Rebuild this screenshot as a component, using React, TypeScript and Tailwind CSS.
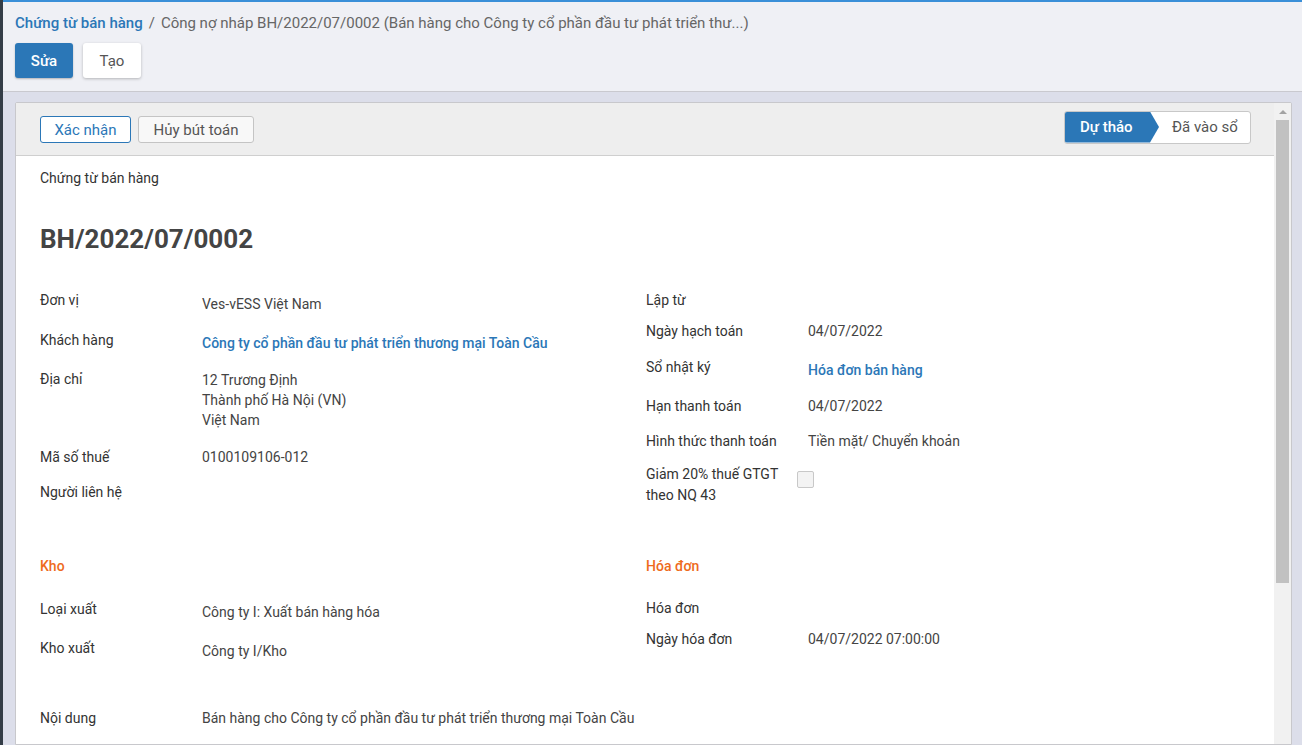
import React from 'react';

const BLUE = 'text-[#2b77b7]';

interface FieldProps {
  label: React.ReactNode;
  value?: React.ReactNode;
  link?: boolean;
  rowH: string;
  valueOffset?: string;
}

const Field: React.FC<FieldProps> = ({ label, value, link, rowH, valueOffset = '' }) => (
  <div className={`flex ${rowH}`}>
    <div className="w-[162px] shrink-0 text-[#333]">{label}</div>
    {value !== undefined && (
      <div className={`${valueOffset} ${link ? `${BLUE} font-medium` : 'text-[#444]'}`}>{value}</div>
    )}
  </div>
);

const ScrollBar = () => (
  <div className="w-[17px] shrink-0 bg-[#f1f1f1] flex flex-col items-center">
    <div className="h-[17px] flex items-center justify-center">
      <div className="w-0 h-0 border-l-[4px] border-r-[4px] border-b-[4px] border-l-transparent border-r-transparent border-b-[#a3a3a3]" />
    </div>
    <div className="w-[13px] h-[463px] bg-[#c1c1c1]" />
  </div>
);

export default function App() {
  return (
    <div
      className="h-[745px] w-full overflow-hidden flex bg-[#dcdeea] text-[14px] leading-[20px]"
      style={{ fontFamily: 'Roboto, "Noto Sans", "Liberation Sans", sans-serif' }}
    >
      {/* left sidebar edge */}
      <div className="w-[3px] shrink-0 bg-[#343d47]" />

      <div className="flex-1 flex flex-col min-w-0">
        <div className="h-[2px] bg-[#3a8fd8]" />

        {/* Control panel */}
        <div className="bg-[#eff0f5] border-b border-[#c9c9cf] h-[90px] px-[12px] pt-[11px]">
          <div className="flex items-center gap-[6px] text-[15px]">
            <span className={`${BLUE} font-medium`}>Chứng từ bán hàng</span>
            <span className="text-[#666]">/</span>
            <span className="text-[#666]">Công nợ nháp BH/2022/07/0002 (Bán hàng cho Công ty cổ phần đầu tư phát triển thư...)</span>
          </div>
          <div className="flex gap-[10px] mt-[10px]">
            <button className="w-[58px] h-[35px] rounded-[3px] bg-[#2b77b7] text-white text-[15px] font-medium shadow-[0_1px_2px_rgba(0,0,0,0.25)]">
              Sửa
            </button>
            <button className="w-[58px] h-[35px] rounded-[3px] bg-white text-[#555] text-[15px] shadow-[0_1px_3px_rgba(0,0,0,0.25)]">
              Tạo
            </button>
          </div>
        </div>

        {/* Content area */}
        <div className="flex-1 pl-[12px] pr-[10px] pt-[10px] min-h-0">
          <div className="h-full bg-white border border-[#c8c8cc] rounded-t-[2px] flex overflow-hidden">
            <div className="flex-1 flex flex-col min-w-0">
              {/* statusbar */}
              <div className="h-[53px] shrink-0 bg-[#eeeeee] border-b border-[#cfcfcf] flex items-center justify-between pl-[24px] pr-[23px] text-[15px]">
                <div className="flex gap-[7px] mt-[1px]">
                  <button className={`h-[27px] w-[91px] rounded-[3px] border border-[#2b77b7] bg-white ${BLUE}`}>
                    Xác nhận
                  </button>
                  <button className="h-[27px] w-[116px] rounded-[3px] border border-[#c4c4c4] bg-[#f8f8f8] text-[#555]">
                    Hủy bút toán
                  </button>
                </div>
                <div className="relative flex h-[33px] w-[187px] rounded-[3px] border border-[#c8c8c8] bg-white overflow-hidden -mt-[4px]">
                  <div className="w-[94px] h-full bg-[#2b77b7] text-white font-medium flex items-center pl-[15px] [clip-path:polygon(0_0,calc(100%-9px)_0,100%_50%,calc(100%-9px)_100%,0_100%)]">
                    Dự thảo
                  </div>
                  <div className="flex-1 flex items-center pl-[13px] text-[#555]">Đã vào sổ</div>
                </div>
              </div>

              {/* form body */}
              <div className="flex-1 pl-[24px] pr-[22px] pt-[12px]">
                <div className="text-[#333]">Chứng từ bán hàng</div>
                <h1 className="mt-[36px] text-[26px] leading-[30px] font-bold text-[#444]">BH/2022/07/0002</h1>

                <div className="grid grid-cols-2 mt-[36px] items-start">
                  <div className="flex flex-col">
                    <Field label="Đơn vị" value="Ves-vESS Việt Nam" rowH="h-[40px]" valueOffset="pt-[4px]" />
                    <Field
                      label="Khách hàng"
                      value="Công ty cổ phần đầu tư phát triển thương mại Toàn Cầu"
                      link
                      rowH="h-[39px]"
                      valueOffset="pt-[3px]"
                    />
                    <Field
                      label="Địa chỉ"
                      value={
                        <>
                          12 Trương Định
                          <br />
                          Thành phố Hà Nội (VN)
                          <br />
                          Việt Nam
                        </>
                      }
                      rowH="h-[78px]"
                      valueOffset="pt-[1px]"
                    />
                    <Field label="Mã số thuế" value="0100109106-012" rowH="h-[35px]" />
                    <Field label="Người liên hệ" rowH="h-[20px]" />
                  </div>

                  <div className="flex flex-col">
                    <Field label="Lập từ" rowH="h-[31px]" />
                    <Field label="Ngày hạch toán" value="04/07/2022" rowH="h-[36px]" />
                    <Field label="Sổ nhật ký" value="Hóa đơn bán hàng" link rowH="h-[39px]" valueOffset="pt-[3px]" />
                    <Field label="Hạn thanh toán" value="04/07/2022" rowH="h-[35px]" />
                    <Field label="Hình thức thanh toán" value="Tiền mặt/ Chuyển khoản" rowH="h-[33px]" />
                    <div className="flex h-[40px]">
                      <div className="w-[151px] shrink-0 text-[#333] leading-[21px]">
                        Giảm 20% thuế GTGT
                        <br />
                        theo NQ 43
                      </div>
                      <div className="mt-[7px] w-[17px] h-[17px] rounded-[2px] border border-[#c8c8c8] bg-[#f3f3f3]" />
                    </div>
                  </div>
                </div>

                <div className="grid grid-cols-2 mt-[52px] items-start">
                  <div className="flex flex-col">
                    <div className="h-[43px] text-[#ee6a1c] font-medium">Kho</div>
                    <Field label="Loại xuất" value="Công ty I: Xuất bán hàng hóa" rowH="h-[39px]" valueOffset="pt-[3px]" />
                    <Field label="Kho xuất" value="Công ty I/Kho" rowH="h-[20px]" valueOffset="pt-[3px]" />
                  </div>
                  <div className="flex flex-col">
                    <div className="h-[42px] text-[#ee6a1c] font-medium">Hóa đơn</div>
                    <Field label="Hóa đơn" rowH="h-[31px]" />
                    <Field label="Ngày hóa đơn" value="04/07/2022 07:00:00" rowH="h-[20px]" />
                  </div>
                </div>

                <div className="mt-[50px]">
                  <Field
                    label="Nội dung"
                    value="Bán hàng cho Công ty cổ phần đầu tư phát triển thương mại Toàn Cầu"
                    rowH="h-[20px]"
                  />
                </div>
              </div>
            </div>
            <ScrollBar />
          </div>
        </div>
      </div>
    </div>
  );
}
